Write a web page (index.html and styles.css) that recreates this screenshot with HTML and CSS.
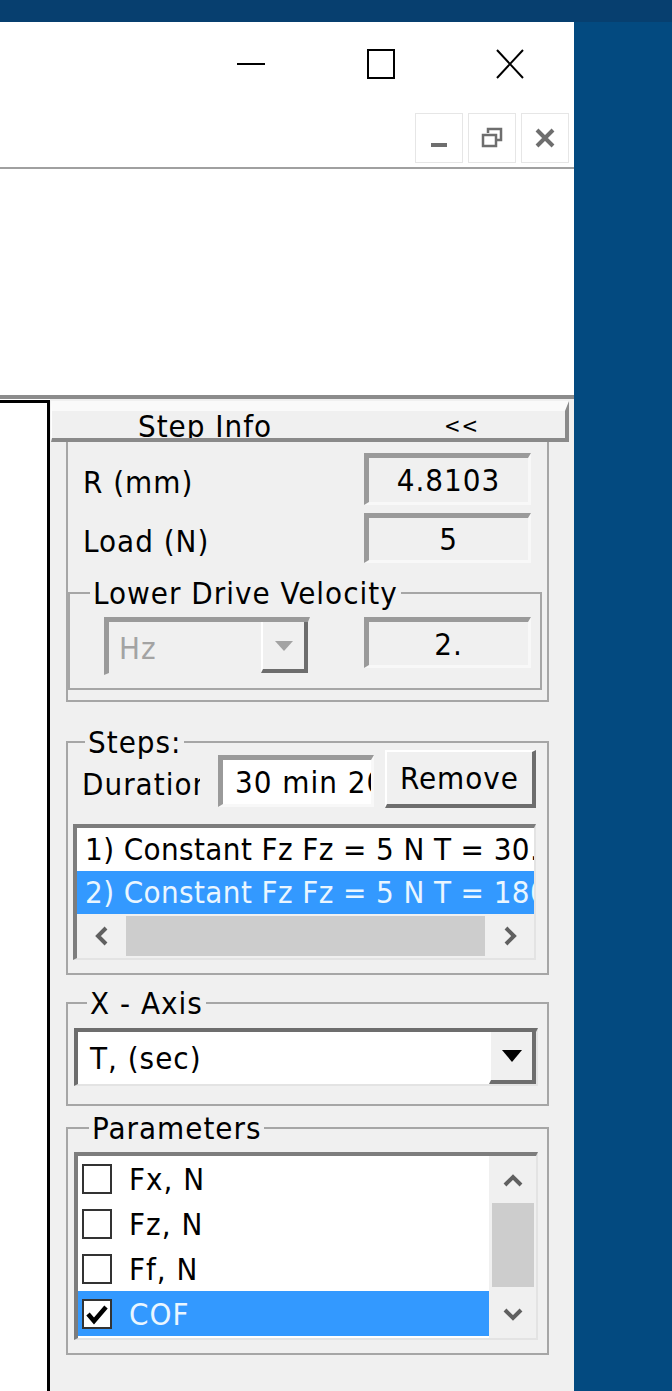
FILE: index.html
```html
<!DOCTYPE html>
<html lang="en">
<head>
    <meta charset="UTF-8" />
    <title>Step Info</title>
    <link rel="stylesheet" href="styles.css">
</head>
<body>
    <div class="desktop">
        <div class="window">
            <div class="titlebar">
                <span class="cap-btn">
                    <svg width="30" height="30" viewBox="0 0 30 30"><line x1="0" y1="15" x2="28" y2="15" stroke="#000" stroke-width="2"/></svg>
                </span>
                <span class="cap-btn">
                    <svg width="30" height="30" viewBox="0 0 30 30"><rect x="2" y="1" width="26" height="28" fill="none" stroke="#000" stroke-width="2"/></svg>
                </span>
                <span class="cap-btn">
                    <svg width="30" height="30" viewBox="0 0 30 30"><path d="M2 1 L28 29 M28 1 L2 29" stroke="#000" stroke-width="2"/></svg>
                </span>
            </div>

            <div class="mdi-bar">
                <span class="mdi-btn">
                    <svg width="24" height="24" viewBox="0 0 24 24"><rect x="4" y="17" width="16" height="4" fill="#6e6e6e"/></svg>
                </span>
                <span class="mdi-btn">
                    <svg width="24" height="24" viewBox="0 0 24 24"><path d="M8 7 V3 H21 V14 H17" fill="none" stroke="#6e6e6e" stroke-width="2.5"/><rect x="3" y="9" width="13" height="11" fill="none" stroke="#6e6e6e" stroke-width="2.5"/></svg>
                </span>
                <span class="mdi-btn">
                    <svg width="24" height="24" viewBox="0 0 24 24"><path d="M4 4 L20 20 M20 4 L4 20" stroke="#6e6e6e" stroke-width="4"/></svg>
                </span>
            </div>

            <div class="client"></div>

            <div class="workspace">
                <div class="chart"></div>

                <div class="side-panel">
                    <div class="step-header">
                        <span class="step-title">Step Info</span>
                        <span class="step-toggle">&lt;&lt;</span>
                    </div>

                    <div class="info-group">
                        <div class="field-row">
                            <span class="field-label">R (mm)</span>
                            <span class="edit readonly r-edit">4.8103</span>
                        </div>
                        <div class="field-row load-row">
                            <span class="field-label">Load (N)</span>
                            <span class="edit readonly load-edit">5</span>
                        </div>
                        <fieldset class="group velocity-group">
                            <legend>Lower Drive Velocity</legend>
                            <div class="velocity-row">
                                <div class="combo disabled">
                                    <span class="combo-text">Hz</span>
                                    <span class="combo-btn">
                                        <svg width="18" height="10" viewBox="0 0 18 10"><path d="M0 0 H18 L9 10 Z" fill="#a3a3a3"/></svg>
                                    </span>
                                </div>
                                <span class="edit readonly vel-edit">2.</span>
                            </div>
                        </fieldset>
                    </div>

                    <fieldset class="group steps-group">
                        <legend>Steps:</legend>
                        <div class="duration-row">
                            <span class="duration-label">Duration</span>
                            <span class="edit duration-edit">30 min 20 sec</span>
                            <span class="push-btn">Remove</span>
                        </div>
                        <div class="listbox steps-list">
                            <div class="list-row">1) Constant Fz Fz = 5 N T = 30.0 min</div>
                            <div class="list-row selected">2) Constant Fz Fz = 5 N T = 180.0 min</div>
                            <div class="hscroll">
                                <span class="scroll-arrow">
                                    <svg width="14" height="20" viewBox="0 0 14 20"><path d="M11 2 L3 10 L11 18" fill="none" stroke="#606060" stroke-width="4"/></svg>
                                </span>
                                <span class="hthumb"></span>
                                <span class="scroll-arrow">
                                    <svg width="14" height="20" viewBox="0 0 14 20"><path d="M3 2 L11 10 L3 18" fill="none" stroke="#606060" stroke-width="4"/></svg>
                                </span>
                            </div>
                        </div>
                    </fieldset>

                    <fieldset class="group axis-group">
                        <legend>X - Axis</legend>
                        <div class="combo axis-combo">
                            <span class="combo-text">T, (sec)</span>
                            <span class="combo-btn">
                                <svg width="20" height="12" viewBox="0 0 20 12"><path d="M0 0 H20 L10 12 Z" fill="#000"/></svg>
                            </span>
                        </div>
                    </fieldset>

                    <fieldset class="group params-group">
                        <legend>Parameters</legend>
                        <div class="listbox params-list">
                            <div class="param-items">
                                <div class="param-row"><span class="check"></span>Fx, N</div>
                                <div class="param-row"><span class="check"></span>Fz, N</div>
                                <div class="param-row"><span class="check"></span>Ff, N</div>
                                <div class="param-row selected">
                                    <span class="check checked">
                                        <svg width="24" height="24" viewBox="0 0 24 24"><path d="M3 12 L9 19 L21 5" fill="none" stroke="#000" stroke-width="4.5"/></svg>
                                    </span>COF
                                </div>
                            </div>
                            <div class="vscroll">
                                <span class="vscroll-arrow">
                                    <svg width="20" height="14" viewBox="0 0 20 14"><path d="M2 12 L10 4 L18 12" fill="none" stroke="#606060" stroke-width="4"/></svg>
                                </span>
                                <span class="vthumb"></span>
                                <span class="vtrack"></span>
                                <span class="vscroll-arrow">
                                    <svg width="20" height="14" viewBox="0 0 20 14"><path d="M2 2 L10 10 L18 2" fill="none" stroke="#606060" stroke-width="4"/></svg>
                                </span>
                            </div>
                        </div>
                    </fieldset>
                </div>
            </div>
        </div>
    </div>
</body>
</html>
```

FILE: styles.css
```css
body {
    margin: 0;
    background: linear-gradient(#073f6f 0, #073f6f 22px, #034a80 22px);
    font-family: "DejaVu Sans Condensed", "DejaVu Sans", sans-serif;
    font-size: 31px;
    letter-spacing: 1px;
    color: #000;
}
.desktop {
    width: 672px;
    height: 1391px;
    padding-top: 22px;
    box-sizing: border-box;
    overflow: hidden;
}
.window {
    width: 574px;
    height: 1369px;
    background-color: #fff;
    display: flex;
    flex-direction: column;
}
.titlebar {
    height: 83px;
    display: flex;
    justify-content: flex-end;
    align-items: center;
    flex: none;
}
.cap-btn {
    width: 129px;
    display: flex;
    justify-content: center;
}
.mdi-bar {
    height: 62px;
    box-sizing: border-box;
    padding: 8px 5px 0 0;
    display: flex;
    justify-content: flex-end;
    gap: 5px;
    flex: none;
}
.mdi-btn {
    width: 48px;
    height: 50px;
    box-sizing: border-box;
    border: 1px solid #e6e6e6;
    display: flex;
    align-items: center;
    justify-content: center;
}
.client {
    height: 226px;
    border-top: 2px solid #a0a0a0;
    flex: none;
}
.workspace {
    flex: 1;
    display: flex;
    border-top: 4px solid #8c8c8c;
    min-height: 0;
}
.chart {
    width: 47px;
    border-top: 3px solid #000;
    border-right: 3px solid #000;
    margin-top: 1px;
    background-color: #fff;
}
.side-panel {
    flex: 1;
    background-color: #f0f0f0;
    padding: 2px 5px 0 1px;
    display: flex;
    flex-direction: column;
}
.step-header {
    display: flex;
    height: 27px;
    overflow: hidden;
    line-height: 30px;
    border-top: 10px solid #fafafa;
    border-bottom: 4px solid #8a8a8a;
    border-right: 4px solid #8a8a8a;
    border-left: 1px solid #fff;
    flex: none;
}
.step-title {
    width: 306px;
    text-align: center;
}
.step-toggle {
    flex: 1;
    text-align: center;
    font-size: 22px;
}
.info-group {
    margin: 0 20px 0 15px;
    border: 2px solid #a6a6a6;
    border-top: none;
    padding: 11px 0 10px 0;
}
.field-row {
    display: flex;
    justify-content: space-between;
    align-items: center;
    padding: 0 16px 0 15px;
}
.field-label {
    padding-top: 5px;
}
.load-row {
    margin-top: 8px;
}
.edit {
    box-sizing: border-box;
    border-style: solid;
    border-width: 5px 3px 3px 5px;
    border-color: #9a9a9a #f8f8f8 #f8f8f8 #9a9a9a;
    background-color: #fff;
    white-space: nowrap;
    overflow: hidden;
    display: flex;
    align-items: center;
}
.readonly {
    background-color: #f0f0f0;
    justify-content: center;
}
.r-edit {
    width: 167px;
    height: 52px;
}
.load-edit {
    width: 167px;
    height: 50px;
}
.group {
    border: 2px solid #a6a6a6;
    margin: 0;
    padding: 0;
    min-width: 0;
}
.group legend {
    padding: 0 3px;
    line-height: 20px;
}
.velocity-group {
    margin: 20px 5px 0 0;
    padding-bottom: 13px;
}
.velocity-group legend {
    margin-left: 20px;
}
.velocity-row {
    display: flex;
    justify-content: space-between;
    align-items: flex-start;
    padding: 0 9px 0 34px;
    margin-top: 14px;
}
.vel-edit {
    width: 167px;
    height: 51px;
}
.combo {
    box-sizing: border-box;
    display: flex;
    border-style: solid;
    border-width: 5px 2px 2px 5px;
    border-color: #9a9a9a #f0f0f0 #f0f0f0 #9a9a9a;
}
.combo.disabled {
    width: 206px;
    height: 58px;
    color: #a3a3a3;
}
.combo-text {
    flex: 1;
    display: flex;
    align-items: center;
    padding-left: 10px;
}
.combo-btn {
    width: 47px;
    box-sizing: border-box;
    border-right: 4px solid #6d6d6d;
    border-bottom: 4px solid #6d6d6d;
    border-left: 2px solid #fff;
    display: flex;
    align-items: center;
    justify-content: center;
    background-color: #f0f0f0;
}
.steps-group {
    margin: 30px 20px 0 15px;
    padding: 0 9px 13px 14px;
}
.steps-group legend {
    margin-left: 3px;
}
.duration-row {
    display: flex;
    align-items: flex-start;
    margin-top: -2px;
}
.duration-label {
    width: 118px;
    overflow: hidden;
    white-space: nowrap;
    margin-top: 16px;
}
.duration-edit {
    width: 156px;
    height: 52px;
    margin: 5px 0 0 18px;
    padding-left: 12px;
}
.push-btn {
    width: 151px;
    height: 58px;
    box-sizing: border-box;
    margin-left: 11px;
    border-style: solid;
    border-width: 2px 4px 4px 2px;
    border-color: #fff #6d6d6d #6d6d6d #fff;
    display: flex;
    align-items: center;
    justify-content: center;
}
.listbox {
    box-sizing: border-box;
    border-style: solid;
    border-width: 4px 2px 2px 4px;
    border-color: #7d7d7d #e3e3e3 #e3e3e3 #7d7d7d;
    background-color: #fff;
}
.steps-list {
    margin: 16px 0 0 -9px;
    width: 463px;
}
.list-row {
    height: 43px;
    line-height: 43px;
    padding-left: 8px;
    letter-spacing: 0.4px;
    white-space: nowrap;
    overflow: hidden;
}
.selected {
    background-color: #3399ff;
    color: #eaf6ff;
}
.hscroll {
    height: 44px;
    display: flex;
    align-items: stretch;
    background-color: #f0f0f0;
}
.scroll-arrow {
    width: 49px;
    display: flex;
    align-items: center;
    justify-content: center;
}
.hthumb {
    flex: 1;
    background-color: #cdcdcd;
    margin: 2px 0;
}
.axis-group {
    margin: 18px 20px 0 15px;
    padding: 0 9px 18px 6px;
}
.axis-group legend {
    margin-left: 13px;
}
.axis-combo {
    height: 58px;
    margin-top: 15px;
    border-width: 4px 2px 2px 4px;
    border-color: #6d6d6d #e3e3e3 #e3e3e3 #6d6d6d;
    background-color: #fff;
}
.axis-combo .combo-text {
    padding-left: 12px;
}
.params-group {
    margin: 12px 20px 0 15px;
    padding: 0 9px 13px 6px;
}
.params-group legend {
    margin-left: 15px;
}
.params-list {
    margin-top: 14px;
    height: 188px;
    display: flex;
}
.param-items {
    flex: 1;
}
.param-row {
    height: 45px;
    display: flex;
    align-items: center;
    padding-left: 4px;
    gap: 17px;
}
.check {
    width: 30px;
    height: 30px;
    box-sizing: border-box;
    border: 2px solid #333;
    background-color: #fff;
    display: flex;
    align-items: center;
    justify-content: center;
}
.vscroll {
    width: 47px;
    background-color: #f0f0f0;
    display: flex;
    flex-direction: column;
}
.vscroll-arrow {
    height: 47px;
    display: flex;
    align-items: center;
    justify-content: center;
}
.vthumb {
    height: 84px;
    margin: 0 2px 0 3px;
    background-color: #cdcdcd;
}
.vtrack {
    flex: 1;
}
```
